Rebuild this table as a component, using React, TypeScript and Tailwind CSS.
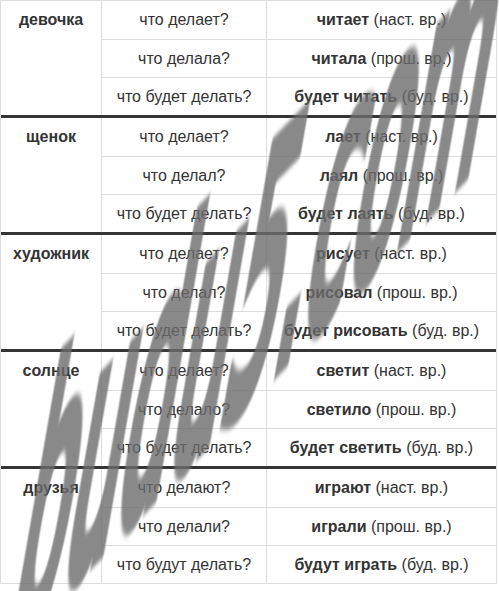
import * as React from 'react'

type Row = { q: string; bold: string; note: string }
type Group = { word: string; rows: Row[] }

const groups: Group[] = [
  {
    word: 'девочка',
    rows: [
      { q: 'что делает?', bold: 'читает', note: '(наст. вр.)' },
      { q: 'что делала?', bold: 'читала', note: '(прош. вр.)' },
      { q: 'что будет делать?', bold: 'будет читать', note: '(буд. вр.)' },
    ],
  },
  {
    word: 'щенок',
    rows: [
      { q: 'что делает?', bold: 'лает', note: '(наст. вр.)' },
      { q: 'что делал?', bold: 'лаял', note: '(прош. вр.)' },
      { q: 'что будет делать?', bold: 'будет лаять', note: '(буд. вр.)' },
    ],
  },
  {
    word: 'художник',
    rows: [
      { q: 'что делает?', bold: 'рисует', note: '(наст. вр.)' },
      { q: 'что делал?', bold: 'рисовал', note: '(прош. вр.)' },
      { q: 'что будет делать?', bold: 'будет рисовать', note: '(буд. вр.)' },
    ],
  },
  {
    word: 'солнце',
    rows: [
      { q: 'что делает?', bold: 'светит', note: '(наст. вр.)' },
      { q: 'что делало?', bold: 'светило', note: '(прош. вр.)' },
      { q: 'что будет делать?', bold: 'будет светить', note: '(буд. вр.)' },
    ],
  },
  {
    word: 'друзья',
    rows: [
      { q: 'что делают?', bold: 'играют', note: '(наст. вр.)' },
      { q: 'что делали?', bold: 'играли', note: '(прош. вр.)' },
      { q: 'что будут делать?', bold: 'будут играть', note: '(буд. вр.)' },
    ],
  },
]

// heights include the 1px bottom rule; group + thick rule = 117px
const rowHeights = ['h-[39px]', 'h-[38px]', 'h-[37px]']

export default function App(): React.JSX.Element {
  return (
    <div className="relative w-[499px] h-[591px] overflow-hidden bg-white font-['Liberation_Sans',Arial,sans-serif] text-[16px] text-[#333]">
      <div className="w-[497px] border border-[#ddd]">
        {groups.map((g, gi) => (
          <div
            key={g.word}
            className={
              gi < groups.length - 1 ? 'flex border-b-[3px] border-[#353535]' : 'flex'
            }
          >
            {/* first column: the noun, sits at the top of the group */}
            <div className="w-[101px] shrink-0 border-r border-[#ddd]">
              <div className="h-[38px] flex items-center justify-center font-bold">{g.word}</div>
            </div>
            <div className="flex-1 flex flex-col">
              {g.rows.map((r, ri) => (
                <div
                  key={r.q}
                  className={
                    'flex ' +
                    rowHeights[ri] +
                    (ri < 2 ? ' border-b border-[#ddd]' : '')
                  }
                >
                  <div className="w-[165px] shrink-0 border-r border-[#ddd] flex items-center justify-center">
                    {r.q}
                  </div>
                  <div className="flex-1 flex items-center justify-center">
                    <span>
                      <b>{r.bold}</b> {r.note}
                    </span>
                  </div>
                </div>
              ))}
            </div>
          </div>
        ))}
      </div>

      {/* watermark */}
      <div className="pointer-events-none absolute left-[6px] top-[575px] h-[80px] origin-[0px_68px] [transform:skewY(-46deg)_skewX(-12deg)_scaleY(3.7)] text-[82px] leading-none font-normal tracking-[1px] font-['DejaVu_Sans',sans-serif] text-[#6c6c6c] [-webkit-text-stroke:6px_#6c6c6c] opacity-80 whitespace-nowrap blur-[0.7px]">
        budu5.com
      </div>
    </div>
  )
}
